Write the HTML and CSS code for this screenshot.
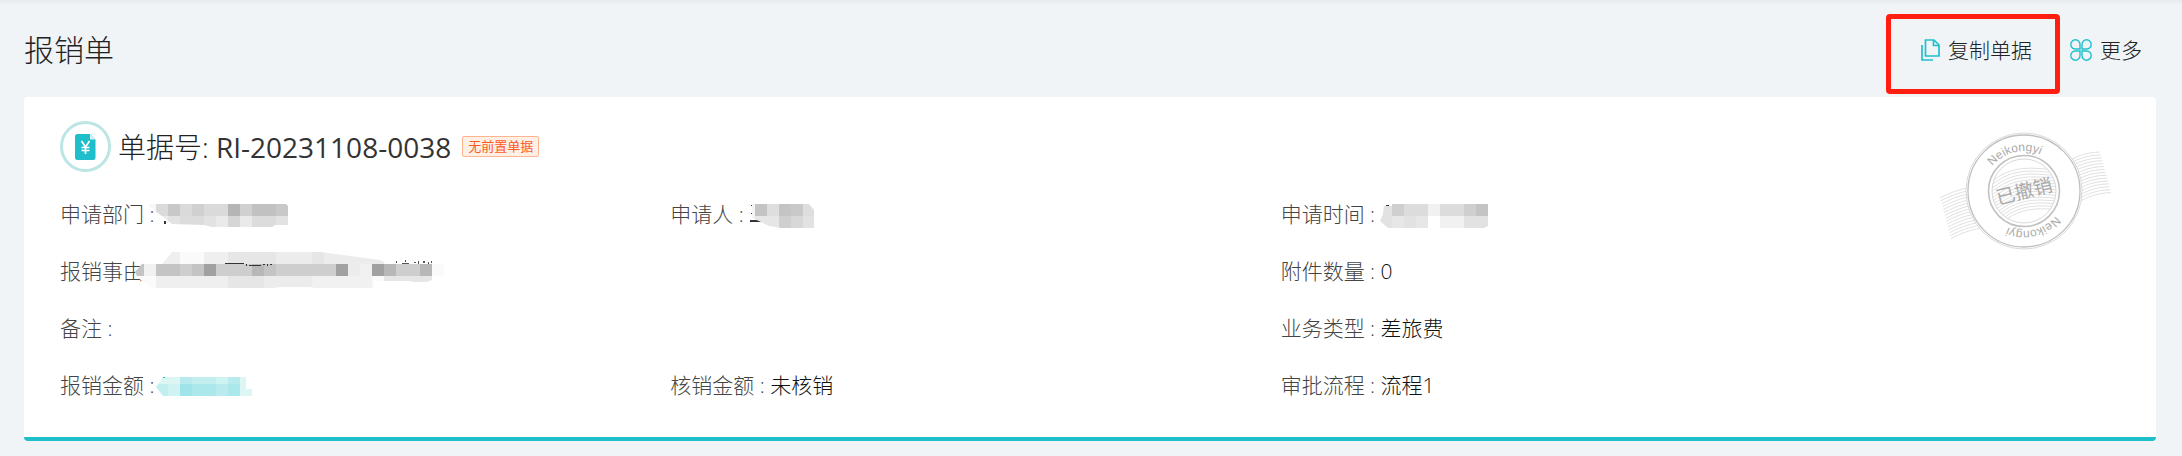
FILE: index.html
```html
<!DOCTYPE html>
<html lang="zh-CN">
<head>
  <meta charset="UTF-8" />
  <meta name="viewport" content="width=device-width, initial-scale=1.0"/>
  <title>报销单</title>
  <link rel="stylesheet" href="styles.css">
</head>
<body>
  <div class="header">
    <h1 class="title">报销单</h1>
    <div class="actions">
      <button type="button" class="action marked">
        <svg class="icon-copy" width="19" height="22" viewBox="0 0 19 22" fill="none" stroke="#1fc0cc" stroke-width="1.7">
          <path d="M4.500 1H13L18 6V17H4.500Z"/>
          <path d="M12.500 1V6.500H18"/>
          <path d="M1 6V21H12"/>
        </svg>
        <span>复制单据</span>
      </button>
      <button type="button" class="action">
        <svg width="22" height="22" viewBox="0 0 22 22" fill="none" stroke="#1fc0cc" stroke-width="1.4">
          <path d="M10 10H5.500A4.600 4.600 0 1 1 10 5.500Z"/>
          <path d="M12 10V5.500A4.600 4.600 0 1 1 16.500 10Z"/>
          <path d="M10 12V16.500A4.600 4.600 0 1 1 5.500 12Z"/>
          <path d="M12 12H16.500A4.600 4.600 0 1 1 12 16.500Z"/>
        </svg>
        <span>更多</span>
      </button>
    </div>
  </div>

  <div class="card">
    <div class="main">
      <div class="bill">
        <span class="bill-icon">
          <svg width="21" height="26" viewBox="0 0 21 26">
            <path d="M2.500 0H15L20.500 5.500V23.500A2.500 2.500 0 0 1 18 26H2.500A2.500 2.500 0 0 1 0 23.500V2.500A2.500 2.500 0 0 1 2.500 0Z" fill="#1fbecb"/>
            <path d="M15 0V5.500H20.500Z" fill="#d5f2f3"/>
            <path d="M6.500 7L10.500 13L14.500 7M6.500 13.500H14.500M6.500 16.500H14.500M10.500 13V20" fill="none" stroke="#fff" stroke-width="1.7"/>
          </svg>
        </span>
        <h2 class="bill-no">单据号: <span class="number">RI-20231108-0038</span></h2>
        <span class="tag">无前置单据</span>
      </div>

      <div class="fields">
        <div class="field">
          <span class="label">申请部门 : </span>
          <svg class="mask mask-dept" width="140" height="24" viewBox="148 204 140 24" shape-rendering="crispEdges">
            <clipPath id="clipDept"><path d="M149 204H286L288 206V225H275L272 227H212L204 225L172 224L149 206Z"/></clipPath>
            <path d="M164 221h2v3h-2z" fill="#333"/>
            <g clip-path="url(#clipDept)">
              <path fill="#f7f7f7" d="M144 204h12v24h-12z"/>
              <path fill="#dadada" d="M156 204h12v12h-12zM180 204h12v12h-12zM204 204h24v12h-24z"/>
              <path fill="#c8c8c8" d="M168 204h12v12h-12zM276 204h12v12h-12z"/>
              <path fill="#d0d0d0" d="M192 204h12v12h-12zM240 204h12v12h-12z"/>
              <path fill="#b5b5b5" d="M228 204h12v12h-12z"/>
              <path fill="#c1c1c1" d="M252 204h24v12h-24z"/>
              <path fill="#eaeaea" d="M156 216h12v12h-12zM216 216h12v12h-12zM240 216h12v12h-12z"/>
              <path fill="#e2e2e2" d="M168 216h12v12h-12zM204 216h12v12h-12zM276 216h12v12h-12z"/>
              <path fill="#dcdcdc" d="M180 216h24v12h-24zM252 216h24v12h-24z"/>
              <path fill="#d6d6d6" d="M228 216h12v12h-12z"/>
            </g>
          </svg>
        </div>
        <div class="field">
          <span class="label">申请人 : </span>
          <svg class="mask mask-user" width="64" height="24" viewBox="751 204 64 24" shape-rendering="crispEdges">
            <clipPath id="clipUser"><path d="M753 204H810L815 210V228H782L770 226L762 222L753 218Z"/></clipPath>
            <path d="M751 220h11v2h-11zM752 205h3v1h-3zM752 213h3v1h-3zM810 208h2v1h-2z" fill="#333"/>
            <g clip-path="url(#clipUser)">
              <path fill="#f4f4f4" d="M753 204h3v24h-3z"/>
              <path fill="#c4c4c4" d="M756 204h12v12h-12zM780 204h12v12h-12z"/>
              <path fill="#dedede" d="M768 204h12v12h-12zM804 204h12v12h-12z"/>
              <path fill="#c9c9c9" d="M792 204h12v12h-12z"/>
              <path fill="#e6e6e6" d="M756 216h24v12h-24z"/>
              <path fill="#cfcfcf" d="M780 216h12v12h-12z"/>
              <path fill="#d8d8d8" d="M792 216h12v12h-12z"/>
              <path fill="#e2e2e2" d="M804 216h12v12h-12z"/>
            </g>
          </svg>
        </div>
        <div class="field">
          <span class="label">申请时间 : </span>
          <svg class="mask mask-time" width="108" height="24" viewBox="1380 204 108 24" shape-rendering="crispEdges">
            <clipPath id="clipTime"><path d="M1384 204H1488V226L1484 228H1388L1380 221L1383 214Z"/></clipPath>
            <g clip-path="url(#clipTime)">
              <path fill="#e2e2e2" d="M1380 206h12v22h-12zM1404 216h12v12h-12zM1464 216h24v12h-24z"/>
              <path fill="#cfcfcf" d="M1392 204h12v12h-12zM1464 204h12v12h-12z"/>
              <path fill="#dcdcdc" d="M1404 204h24v12h-24zM1440 204h24v12h-24z"/>
              <path fill="#f1f1f1" d="M1428 204h12v12h-12zM1440 216h24v12h-24z"/>
              <path fill="#c4c4c4" d="M1476 204h12v12h-12z"/>
              <path fill="#e7e7e7" d="M1392 216h12v12h-12zM1416 216h12v12h-12z"/>
            </g>
            <path d="M1386 205h3v1h-3z" fill="#333"/>
          </svg>
        </div>

        <div class="field wide">
          <span class="label">报销事由</span>
          <svg class="mask mask-reason" width="310" height="36" viewBox="134 252 310 36" shape-rendering="crispEdges">
            <clipPath id="clipReason"><path d="M172 252H320L380 260L388 264H444V276H432V280L426 282H414L408 281H374V288H316L310 287H280L274 288H152L138 278L135 272L142 264H162Z"/></clipPath>
            <g clip-path="url(#clipReason)">
              <path fill="#fafafa" d="M134 252h310v36h-310z"/>
              <path fill="#efefef" d="M160 252h20v12h-20zM204 252h48v12h-48zM156 276h72v12h-72z"/>
              <path fill="#e6e6e6" d="M228 252h48v12h-48zM312 252h12v12h-12zM228 276h36v12h-36zM384 276h48v8h-48z"/>
              <path fill="#ececec" d="M276 252h36v12h-36zM324 252h60v12h-60zM264 276h48v12h-48zM348 264h12v12h-12z"/>
              <path fill="#f1f1f1" d="M312 276h60v12h-60zM360 264h12v12h-12zM144 264h12v12h-12z"/>
              <path fill="#c4c4c4" d="M132 264h12v12h-12zM156 264h24v12h-24zM192 264h12v12h-12zM264 264h12v12h-12z"/>
              <path fill="#cecece" d="M180 264h12v12h-12zM216 264h36v12h-36zM276 264h60v12h-60zM396 264h24v12h-24z"/>
              <path fill="#b7b7b7" d="M252 264h12v12h-12zM384 264h12v12h-12zM420 264h12v12h-12z"/>
              <path fill="#a1a1a1" d="M204 264h12v12h-12zM336 264h12v12h-12zM372 264h12v12h-12z"/>
            </g>
            <path d="M225 263h19v1h-19zM246 264h1v2h-1zM249 265h12v1h-12zM263 264h2v1h-2zM267 264h1v2h-1zM270 264h2v1h-2z" fill="#333"/>
            <path d="M396 261h1v2h-1zM405 260h1v2h-1zM402 263h7v1h-7zM414 262h2v1h-2zM418 261h1v3h-1zM423 261h2v2h-2zM428 262h1v2h-1zM431 261h1v2h-1z" fill="#555"/>
          </svg>
        </div>
        <div class="field">
          <span class="label">附件数量 : </span><span class="value">0</span>
        </div>

        <div class="field wide">
          <span class="label">备注 : </span>
        </div>
        <div class="field">
          <span class="label">业务类型 : </span><span class="value">差旅费</span>
        </div>

        <div class="field">
          <span class="label">报销金额 : </span>
          <svg class="mask mask-amount" width="96" height="20" viewBox="156 377 96 20" shape-rendering="crispEdges">
            <clipPath id="clipAmount"><path d="M163 377H246V389H252V396H163L156 387Z"/></clipPath>
            <g clip-path="url(#clipAmount)">
              <path fill="#ddf5f5" d="M156 377h24v7h-24zM240 377h12v19h-12z"/>
              <path fill="#b9ebee" d="M180 377h12v7h-12zM228 377h12v7h-12zM216 384h12v12h-12z"/>
              <path fill="#c3eef0" d="M192 377h24v7h-24zM156 384h12v12h-12z"/>
              <path fill="#cff2f3" d="M216 377h12v7h-12zM168 384h12v12h-12z"/>
              <path fill="#9ee4e9" d="M180 384h12v12h-12z"/>
              <path fill="#abe8eb" d="M192 384h24v12h-24zM228 384h12v12h-12z"/>
            </g>
            <path d="M163 377h2v1h-2z" fill="#1fbecb"/>
          </svg>
        </div>
        <div class="field">
          <span class="label">核销金额 : </span><span class="value">未核销</span>
        </div>
        <div class="field">
          <span class="label">审批流程 : </span><span class="value">流程1</span>
        </div>
      </div>
    </div>

    <svg class="stamp" width="173" height="119" viewBox="19 11 173 119">
      <defs>
        <path id="wave" d="M20 77C48 62 60 69 75 58S106 46 125 48S148 32 180 31"/>
        <g id="waves" fill="none" stroke="#d8d8d8" stroke-width=".8">
          <use href="#wave"/>
          <use href="#wave" x=".8" y="2.900"/>
          <use href="#wave" x="1.600" y="5.800"/>
          <use href="#wave" x="2.400" y="8.700"/>
          <use href="#wave" x="3.200" y="11.600"/>
          <use href="#wave" x="4" y="14.500"/>
          <use href="#wave" x="4.800" y="17.400"/>
          <use href="#wave" x="5.600" y="20.300"/>
          <use href="#wave" x="6.400" y="23.200"/>
          <use href="#wave" x="7.200" y="26.100"/>
          <use href="#wave" x="8" y="29"/>
          <use href="#wave" x="8.800" y="31.900"/>
          <use href="#wave" x="9.600" y="34.800"/>
          <use href="#wave" x="10.400" y="37.700"/>
          <use href="#wave" x="11" y="40.600"/>
        </g>
        <clipPath id="clipInner"><circle cx="104" cy="70" r="32"/></clipPath>
        <path id="arc" d="M64 70A40 40 0 0 1 144 70"/>
      </defs>
      <use href="#waves"/>
      <circle cx="104" cy="70" r="58" fill="#fff" stroke="#c8c8c8" stroke-width=".7"/>
      <circle cx="104" cy="70" r="56" fill="none" stroke="#bfbfbf" stroke-width="1.3"/>
      <use href="#waves" clip-path="url(#clipInner)"/>
      <circle cx="104" cy="70" r="35.500" fill="none" stroke="#bfbfbf" stroke-width="1.500"/>
      <circle cx="104" cy="70" r="32" fill="none" stroke="#c8c8c8" stroke-width=".7"/>
      <text class="stamp-name" transform="rotate(-14 104 70)"><textPath href="#arc" startOffset="50%">Neikongyi</textPath></text>
      <text class="stamp-name" transform="rotate(166 104 70)"><textPath href="#arc" startOffset="50%">Neikongyi</textPath></text>
      <text class="stamp-state" x="104" y="77" transform="rotate(-14 104 70)">已撤销</text>
    </svg>
  </div>
</body>
</html>
```
FILE: styles.css
```css
* {
  box-sizing: border-box;
}
body {
  margin: 0;
  min-height: 100vh;
  background-color: #f0f4f7;
  box-shadow: inset 0 4px 4px -2px rgba(0, 0, 0, 0.05);
  font-family: "Open Sans", "Noto Sans CJK SC", sans-serif;
  font-weight: 300;
  color: #333;
}
.header {
  display: flex;
  align-items: center;
  justify-content: space-between;
  height: 97px;
  padding: 3px 40px 0 24px;
}
.title {
  margin: 0;
  font-size: 30px;
  line-height: 40px;
  font-weight: 300;
  color: #222;
}
.actions {
  display: flex;
  gap: 38px;
}
.action {
  position: relative;
  display: flex;
  align-items: center;
  gap: 8px;
  padding: 0;
  border: 0;
  background: none;
  font: inherit;
  font-size: 21px;
  line-height: 32px;
  color: #222;
  cursor: pointer;
}
.marked::after {
  content: "";
  position: absolute;
  top: -20px;
  right: -28px;
  bottom: -28px;
  left: -35px;
  border: 5px solid #ff1e10;
  border-radius: 4px;
}
.card {
  display: flex;
  align-items: flex-start;
  gap: 48px;
  margin: 0 26px 0 24px;
  padding: 24px 44px 36px 36px;
  background-color: #fff;
  border-bottom: 4px solid #1fbecb;
  border-radius: 4px;
}
.main {
  flex: 1;
}
.bill {
  display: flex;
  align-items: center;
  height: 51px;
}
.bill-icon {
  display: flex;
  align-items: center;
  justify-content: center;
  width: 51px;
  height: 51px;
  border: 3px solid #bce6e3;
  border-radius: 50%;
}
.bill-no {
  margin: 0 11px 0 7px;
  font-size: 28px;
  line-height: 40px;
  font-weight: 300;
  color: #222;
}
.number {
  font-weight: 400;
  color: #333;
}
.tag {
  padding: 0 5px;
  border: 1px solid #ffb48f;
  border-radius: 2px;
  background-color: #fff0e6;
  font-size: 13px;
  line-height: 19px;
  font-weight: 400;
  color: #ff5a1f;
}
.fields {
  display: grid;
  grid-template-columns: repeat(3, 1fr);
  row-gap: 25px;
  padding-top: 26px;
}
.field {
  position: relative;
  font-size: 21px;
  line-height: 32px;
}
.wide {
  grid-column: span 2;
}
.label {
  color: #444;
  white-space: pre;
}
.value {
  color: #111;
}
/* blurred values */
.mask {
  position: absolute;
  top: 6px;
}
.mask-dept {
  left: 88px;
}
.mask-user {
  left: 80px;
}
.mask-time {
  left: 99px;
}
.mask-reason {
  top: -3px;
  left: 74px;
}
.mask-amount {
  top: 8px;
  left: 96px;
}
.stamp {
  flex: none;
  margin-top: 11px;
}
.stamp-name {
  font-family: "Liberation Sans", sans-serif;
  font-size: 12px;
  font-weight: 400;
  fill: #aaa;
  text-anchor: middle;
}
.stamp-state {
  font-size: 19px;
  font-weight: 400;
  fill: #aaa;
  text-anchor: middle;
}
```
